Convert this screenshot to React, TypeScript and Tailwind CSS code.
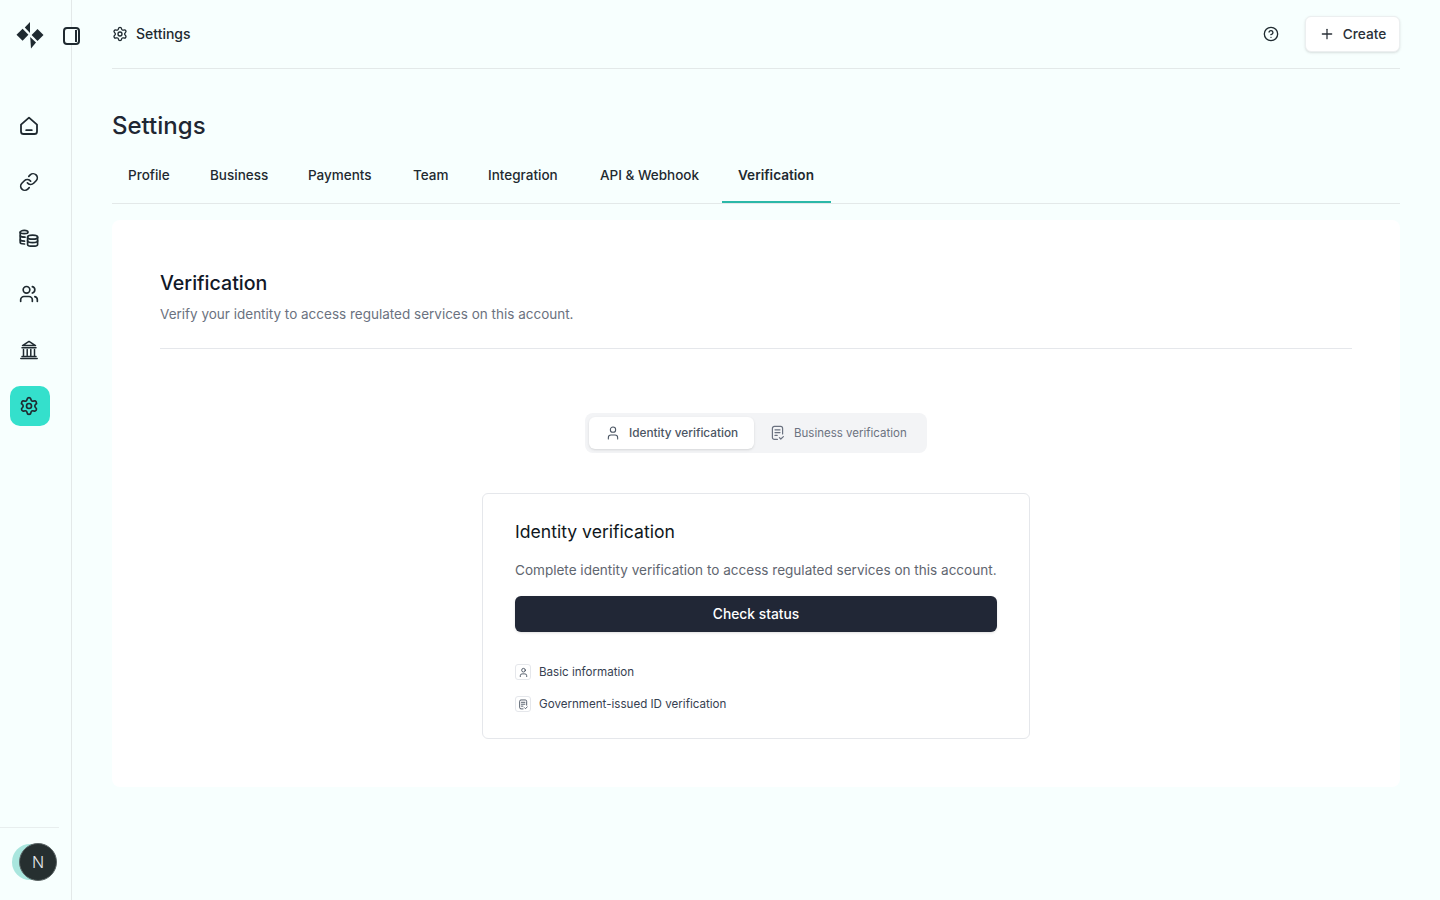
import React from "react";
import { Link, Users, Settings, HelpCircle, Plus, User } from "lucide-react";

function Logo() {
  return (
    <svg width="28" height="28" viewBox="0 0 28 28" fill="#1f2a30">
      <path d="M0.5 12.8 L6.6 6.8 L12.4 12.8 L6.6 18.8 Z" />
      <path d="M15.6 13 L21.5 7 L27.5 13 L21.5 19 Z" />
      <path d="M14 0 L14 11 L8.8 5.6 Z" />
      <path d="M14.2 15 L20 20.4 L15 26.5 Z" />
    </svg>
  );
}

function HomeIcon() {
  return (
    <svg width="20" height="20" viewBox="0 0 20 20" fill="none" stroke="#1f2a30" strokeWidth="1.8" strokeLinecap="round" strokeLinejoin="round">
      <path d="M2 8.6 L10 1.6 L18 8.6 V15.4 A2.6 2.6 0 0 1 15.4 18 H4.6 A2.6 2.6 0 0 1 2 15.4 Z" />
      <path d="M7.2 14.2 H12.8" />
    </svg>
  );
}

function Coins() {
  return (
    <svg width="20" height="20" viewBox="0 0 20 20" fill="none" stroke="#1f2a30" strokeWidth="1.7" strokeLinecap="round" strokeLinejoin="round">
      <path d="M9 4.2 C9 5.2 7.2 5.6 5.2 5.6 S1.2 5.2 1.2 4.2 S3.2 2.4 5.2 2.4 S9 3.2 9 4.2 Z" />
      <path d="M1.2 4.2 V14.6 C1.2 15.6 2.8 16 5.5 16" />
      <path d="M1.4 8 C2 8.9 3.5 9.2 6 9.2" />
      <path d="M1.4 12 C2 12.9 3.5 13.2 5.5 13.2" />
      <ellipse cx="13.6" cy="9.2" rx="5" ry="2" />
      <path d="M8.6 9.2 V16.4 C8.6 17.5 10.8 18.2 13.6 18.2 S18.6 17.5 18.6 16.4 V9.2" />
      <path d="M8.6 12.8 C8.6 13.9 10.8 14.6 13.6 14.6 S18.6 13.9 18.6 12.8" />
    </svg>
  );
}

function Bank() {
  return (
    <svg width="20" height="20" viewBox="0 0 20 20" fill="none" stroke="#1f2a30" strokeWidth="1.5" strokeLinecap="round" strokeLinejoin="round">
      <path d="M3.5 5.6 L10 1.4 L16.5 5.6 H3.5 Z" />
      <path d="M3 7.8 H17" />
      <path d="M4.5 9.5 V15.5 M8.2 9.5 V15.5 M11.8 9.5 V15.5 M15.5 9.5 V15.5" />
      <path d="M3 16.4 H17" />
      <path d="M1.8 18.6 H18.2" />
    </svg>
  );
}

function Doc({ size = 16, color = "#6b7280" }: { size?: number; color?: string }) {
  return (
    <svg width={size} height={size} viewBox="0 0 16 16" fill="none" stroke={color} strokeWidth="1.2" strokeLinecap="round" strokeLinejoin="round">
      <path d="M7.4 14.4 H4.4 A2 2 0 0 1 2.4 12.4 V3.4 A2 2 0 0 1 4.4 1.4 H10.6 A2 2 0 0 1 12.6 3.4 V9" />
      <path d="M5 4.8 H10 M5 7.6 H10 M5 10.4 H7.2" />
      <path d="M9.4 12.6 L10.8 14 L13.4 11.6" />
    </svg>
  );
}

const navItems = [
  <HomeIcon key="h" />,
  <Link key="l" size={20} strokeWidth={2} color="#1f2a30" />,
  <Coins key="c" />,
  <Users key="u" size={20} strokeWidth={2} color="#1f2a30" />,
  <Bank key="b" />,
];

const tabs = [
  { label: "Profile", cls: "w-[82px]" },
  { label: "Business", cls: "w-[98px]" },
  { label: "Payments", cls: "w-[105px]" },
  { label: "Team", cls: "w-[75px]" },
  { label: "Integration", cls: "w-[112px]" },
  { label: "API & Webhook", cls: "w-[138px]" },
];

export default function App() {
  return (
    <div className="flex min-h-[900px] bg-[#f7fffe] font-['Inter',sans-serif] text-[#1f2a30]">
      <aside className="relative w-[72px] h-[900px] shrink-0 border-r border-[#e3e9e9] flex flex-col">
        <div className="h-[72px] pl-4 flex items-center">
          <Logo />
        </div>
        <button className="absolute left-[63px] top-[27px] w-[17px] h-[18px] rounded-[4px] border-2 border-[#1f2a30] bg-[#f7fffe] flex justify-end pr-px py-px">
          <span className="w-[2px] h-full bg-[#1f2a30]" />
        </button>
        <nav className="mt-[34px] ml-[10px] flex flex-col gap-4">
          {navItems.map((icon, i) => (
            <div key={i} className="w-10 h-10 pr-[2px] flex items-center justify-center">{icon}</div>
          ))}
          <div className="w-10 h-10 pr-[2px] rounded-[10px] bg-[#34e0cc] flex items-center justify-center">
            <Settings size={20} strokeWidth={2} color="#1f2a30" />
          </div>
        </nav>
        <div className="mt-auto w-[59px] border-t border-[#e8eeee] h-[73px] flex items-center pl-3 pb-[4px]">
          <div className="relative w-[45px] h-9">
            <div className="absolute left-0 top-0 w-9 h-9 rounded-full bg-[#a9e6de]" />
            <div className="absolute left-[7px] top-[-1px] w-[38px] h-[38px] rounded-full bg-[#262f30] border border-[#5b6465] flex items-center justify-center text-[#e5e7eb] text-[16px] font-light">N</div>
          </div>
        </div>
      </aside>
      <main className="flex-1 min-w-0 px-10">
        <header className="h-[69px] border-b border-[#e3e9e9] flex items-center">
          <Settings size={16} strokeWidth={2} color="#1f2a30" />
          <span className="ml-2 pb-px text-[14px] font-medium">Settings</span>
          <HelpCircle size={16} strokeWidth={2} color="#1f2a30" className="ml-auto" />
          <button className="ml-[26px] h-9 w-[95px] rounded-md bg-white border border-[#eceff0] shadow-sm flex items-center justify-center gap-[8px] text-[13.7px] font-medium text-[#2a3038]">
            <Plus size={16} strokeWidth={1.9} />
            Create
          </button>
        </header>
        <h1 className="mt-[41px] text-[24px] leading-8 font-medium text-[#1f2733]">Settings</h1>
        <div className="mt-[6px] h-[56px] flex border-b border-[#e3e9e9]">
          {tabs.map((t) => (
            <div key={t.label} className={`${t.cls} h-[55px] pl-4 pb-[1px] flex items-center text-[13.5px] font-medium`}>
              {t.label}
            </div>
          ))}
          <div className="w-[109px] h-[55px] px-4 pt-[2px] flex items-center text-[13.6px] font-semibold border-b-2 border-[#2bb8a8]">
            Verification
          </div>
        </div>
        <section className="mt-4 h-[567px] bg-white rounded-lg px-12 pt-[49px]">
          <h2 className="text-[19.6px] leading-7 font-medium text-[#111827]">Verification</h2>
          <p className="mt-[5px] text-[13.5px] leading-6 text-[#6b7280]">Verify your identity to access regulated services on this account.</p>
          <div className="mt-[22px] border-t border-[#e5e7eb]" />
          <div className="mt-16 flex justify-center">
            <div className="h-10 w-[342px] bg-[#f3f4f6] rounded-lg p-1 flex">
              <div className="w-[165px] h-8 rounded-md bg-white shadow-sm flex items-center pl-4 gap-2 text-[11.8px] font-medium text-[#4b5563]">
                <User size={16} strokeWidth={1.6} color="#4b5563" />
                <span className="pt-px">Identity verification</span>
              </div>
              <div className="flex items-center pl-4 gap-2 text-[11.5px] text-[#6b7280] font-normal">
                <Doc />
                <span className="pt-px">Business verification</span>
              </div>
            </div>
          </div>
          <div className="mt-10 mx-auto w-[548px] h-[246px] border border-[#e5e7eb] rounded-md px-8 pt-6">
            <h3 className="text-[17.6px] leading-7 font-normal text-[#0f1720]">Identity verification</h3>
            <p className="mt-[12px] text-[13.55px] leading-6 text-[#5f6670]">Complete identity verification to access regulated services on this account.</p>
            <button className="mt-[14px] w-full h-9 rounded-md bg-[#212736] shadow-sm text-white text-[13.8px] font-medium">Check status</button>
            <ul className="mt-8 flex flex-col gap-4">
              <li className="h-4 flex items-center gap-2 text-[11.6px] leading-4 text-[#374151]">
                <span className="w-4 h-4 rounded-[3px] border border-[#e5e7eb] flex items-center justify-center">
                  <User size={11} strokeWidth={1.8} color="#374151" />
                </span>
                Basic information
              </li>
              <li className="h-4 flex items-center gap-2 text-[11.6px] leading-4 text-[#374151]">
                <span className="w-4 h-4 rounded-[3px] border border-[#e5e7eb] flex items-center justify-center">
                  <Doc size={11} color="#374151" />
                </span>
                Government-issued ID verification
              </li>
            </ul>
          </div>
        </section>
      </main>
    </div>
  );
}
